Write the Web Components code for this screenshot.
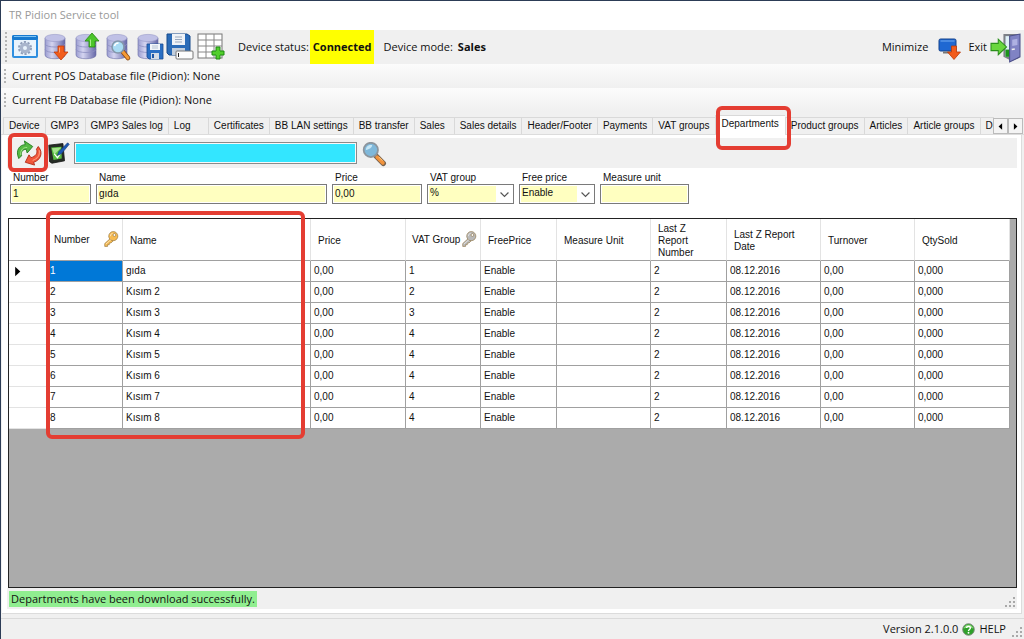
<!DOCTYPE html>
<html lang="en">
<head>
<meta charset="utf-8">
<title>TR Pidion Service tool</title>
<style>
html,body{margin:0;height:100%}
body{font:11px/16px "Open Sans","Noto Sans",sans-serif;color:#111;background:#f0f0f0}
</style>
</head>
<body>
<service-window heading="TR Pidion Service tool"></service-window>

<script>
const ICONS = {
settings:`<rect x="1" y="2" width="26" height="23" rx="2" fill="#2f8fe0"/><rect x="1" y="2" width="26" height="5" rx="2" fill="#1679cf"/><rect x="3" y="3" width="22" height="1" fill="#7cc3f5"/><rect x="3" y="7" width="22" height="16" fill="#e9f3fc"/><circle cx="14" cy="15" r="6" fill="none" stroke="#8f9db8" stroke-width="2" stroke-dasharray="2.2 1.57"/><circle cx="14" cy="15" r="5.4" fill="#a9b5cc"/><circle cx="14" cy="15" r="2" fill="#e9f3fc"/>`,
db:`<defs><linearGradient id="g"><stop offset="0" stop-color="#9a9cd0"/><stop offset=".35" stop-color="#d4d4f0"/><stop offset="1" stop-color="#6668a8"/></linearGradient></defs><path d="M3 5v17c0 5 20 5 20 0V5z" fill="url(#g)" stroke="#6c6ea6" stroke-width=".6"/><ellipse cx="13" cy="5" rx="10" ry="3.6" fill="#c0c1e6" stroke="#9799c8" stroke-width=".6"/><path d="M3 11c1 4 19 4 20 0M3 16.500c1 4 19 4 20 0" fill="none" stroke="#8d8fc2" stroke-width=".8"/>`,
down:`<path d="M16 13h6v6h4l-7 8-7-8h4z" fill="#f25c1c" stroke="#c43a08" stroke-width=".8"/><path d="M17.500 14.500v5" stroke="#ffa56e"/>`,
up:`<path d="M16 14h6V8h4L19 0l-7 8h4z" fill="#4cc52a" stroke="#26880f" stroke-width=".8"/><path d="M17.500 13V6.500" stroke="#a7f088"/>`,
lens:`<path d="M19 19l5 6" stroke="#8a4a16" stroke-width="4.600" stroke-linecap="round"/><path d="M19 19l5 6" stroke="#f59a35" stroke-width="3" stroke-linecap="round"/><circle cx="14" cy="14" r="6" fill="#a9dcf4" stroke="#8497ab" stroke-width="1.600"/><path d="M10.500 13c.5-2 2-3 4-3" stroke="#fff" fill="none" stroke-width="1.400"/>`,
disk:`<path d="M12 11h16v15H14l-2-2z" fill="#2a6fc4" stroke="#1b4c93" stroke-width=".8"/><rect x="15" y="11" width="10" height="6" fill="#f3f6fa"/><path d="M17 13h6M17 15h6" stroke="#9fb0c4" stroke-width=".7"/><rect x="16" y="20" width="8" height="6" fill="#d4dce6"/><rect x="17" y="21" width="2" height="4" fill="#1d55a5"/>`,
save:`<path d="M1 1h20l3 2v19H3l-2-2z" fill="#2b6cb8" stroke="#174a8c"/><path d="M6 1h13v11H6z" fill="#eef2f7"/><path d="M9 4h7M9 6.500h7M9 9h7" stroke="#98a8bd"/><path d="M6 15h13v7H6z" fill="#c3cfdd"/><rect x="10" y="18" width="17" height="8" rx="1" fill="#fdfdfd" stroke="#777"/><path d="M12.500 20v4" stroke="#222"/>`,
table:`<rect x="1" y="1" width="24" height="24" fill="#fff" stroke="#777"/><path d="M9 1v24M17 1v24M1 7h24M1 13h24M1 19h24" stroke="#888"/><path d="M19 14h4v4h4v4h-4v4h-4v-4h-4v-4h4z" fill="#52cf2c" stroke="#1d8a10"/>`,
screen:`<rect x="5" y="6" width="17" height="12" rx="1.500" fill="#1f68d2" stroke="#15428c"/><path d="M6.500 8h14" stroke="#74acf2"/><path d="M9 19.500h9" stroke="#777" stroke-width="2"/><path d="M17.500 13h5v6h4l-6.500 7.500-6.500-7.500h4z" fill="#f25c1c" stroke="#b93a0a" stroke-width=".8"/>`,
exit:`<path d="M12 1h15v23l-7 3-8-4z" fill="#7d8087"/><path d="M14 3h7v20h-7z" fill="#def1f8"/><path d="M14 16h7v7h-7z" fill="#1c941b"/><path d="M18 3l10-2v22l-10 5z" fill="#8083c4" stroke="#4e518b"/><path d="M20.500 6.500l5-1v6l-5 1z" fill="#aeb1e2"/><path d="M20 16l3-.6" stroke="#eee" stroke-width="1.500"/><path d="M0 10h7V6l8 7.500-8 7.500v-4H0z" fill="#69d63e" stroke="#2b901b"/>`,
refresh:`<path d="M3 20C-1 11 4 5 10 5L9 1l9 6-6 7-1-4c-4 0-6 3-5 7z" fill="#55b944" stroke="#267f22"/><path d="M5 16c0-6 3-8 7-8" fill="none" stroke="#a6e68d"/><path d="M24 7c6 7 2 15-5 17l1 3-10-3 4-8 2 3c5-1 8-5 6-9z" fill="#f1573b" stroke="#b22b18"/><path d="M25 11c1 6-2 9-7 11" fill="none" stroke="#ffad8c"/>`,
edit:`<path d="M1 4l18-2 2 22-16 3-3-2z" fill="#262d26" stroke="#111"/><path d="M4 7l13-1 .5 15L7 23z" fill="#59bd41"/><path d="M5 8l12-1-9 9z" fill="#a5e28e"/><path d="M8 15l4 5 10-14" fill="none" stroke="#fff" stroke-width="1.500"/><path d="M12 17l2-5L25 1l2 2-10 12z" fill="#1e58b4" stroke="#123872" stroke-width=".8"/>`,
search:`<path d="M17 17l8 8" stroke="#76624e" stroke-width="6" stroke-linecap="round"/><path d="M18 18l6.500 6.500" stroke="#f2933c" stroke-width="4" stroke-linecap="round"/><path d="M20 18l4 4" stroke="#ffd28c"/><circle cx="11" cy="10" r="8" fill="#7fb8da" stroke="#8c959d" stroke-width="2"/><path d="M5.500 10c0-4 3-6 7-5.500 0 3-3 5-7 5.500z" fill="#c6e6f5"/>`,
key:`<path d="M14 12L3 22v5h5v-3h3v-3h3l4-4z" fill="currentColor" stroke="#8a6d3a"/><circle cx="18" cy="9" r="8" fill="currentColor" stroke="#8a6d3a"/><circle cx="20" cy="7" r="2.400" fill="#fff" stroke="#8a6d3a"/><path d="M13 9c0-3 2-5 4-5M5 23l9-8" stroke="#fffa" fill="none" stroke-width="1.500"/>`,
help:`<circle cx="14" cy="14" r="12.500" fill="#2fa02a" stroke="#7d8a7c" stroke-width="2"/><path d="M4 12c1-11 19-11 20 0-6-3-14-3-20 0z" fill="#8ddc7d"/><path d="M10 11c0-5 8-5 8 0 0 3-4 3-4 6" fill="none" stroke="#fff" stroke-width="3"/><circle cx="14" cy="21" r="2" fill="#fff"/>`,
chevron:`<path d="M4 9l10 10 10-10" fill="none" stroke="#555" stroke-width="3"/>`,
left:`<path d="M19 4v20L8 14z" fill="#000"/>`,
right:`<path d="M9 4v20l11-10z" fill="#000"/>`
};
const COMBINED = {dbdown:['db','down'],dbup:['db','up'],dbfind:['db','lens'],dbsave:['db','disk']};

class ServiceElement extends HTMLElement {
  connectedCallback(){
    if(this.shadowRoot) return;
    const t=document.createElement('template');
    t.innerHTML=`<style>*{box-sizing:border-box}button{font:inherit;color:inherit;background:none;border:0;padding:0;margin:0;display:flex;align-items:center}</style>${this.render()}`;
    this.attachShadow({mode:'open'}).append(t.content.cloneNode(true));
  }
}

customElements.define('pd-icon', class extends ServiceElement {
  render(){
    const n=this.getAttribute('name');
    const body=(COMBINED[n]||[n]).map(k=>ICONS[k]).join('');
    return `<style>:host{display:block;flex:none;width:var(--size,28px);height:var(--size,28px)}svg{display:block;width:100%;height:100%;overflow:visible}</style>
    <svg viewBox="0 0 28 28" aria-hidden="true">${body}</svg>`;
  }
});

customElements.define('pd-grip', class extends ServiceElement {
  render(){
    return `<style>:host{display:block;flex:none;width:2px;height:var(--grip,14px);background:repeating-linear-gradient(#b4b4b4 0 2px,transparent 2px 4px)}</style>`;
  }
});

customElements.define('pd-sizer', class extends ServiceElement {
  render(){
    const d=[[8,0],[4,4],[8,4],[0,8],[4,8],[8,8]].map(([x,y])=>`<rect x="${x}" y="${y}" width="2" height="2"/>`).join('');
    return `<style>:host{display:block;flex:none}svg{display:block;fill:#a9a9a9}</style><svg width="10" height="10" aria-hidden="true">${d}</svg>`;
  }
});

customElements.define('pd-callout', class extends ServiceElement {
  render(){
    return `<style>:host{display:block;position:absolute;z-index:3;border:4px solid #e43d32;border-radius:6px;pointer-events:none}</style>`;
  }
});

customElements.define('pd-toolbar', class extends ServiceElement {
  render(){
    const tools=[['settings','Settings'],['dbdown','Download database'],['dbup','Upload database'],['dbfind','Browse database'],['dbsave','Save database'],['save','Save as'],['table','Add table']];
    return `<style>
    :host{display:flex;align-items:center;height:34px;padding:0 4px 0 4px;background:#f0f0f0}
    pd-grip{--grip:30px}
    .tools{display:flex;gap:3px;margin:0 13px 0 4px}
    .tools pd-icon{--size:28px}
    .state{align-self:stretch;display:flex;align-items:center;background:#ff0;padding:0 3px;margin:0 9px 0 1px}
    .mode{margin-left:5px}
    .spacer{flex:1}
    .min{gap:6px;margin-right:6px}
    .exit{gap:4px}
    .exit pd-icon{--size:29px}
    </style>
    <pd-grip></pd-grip>
    <div class="tools">${tools.map(([i,l])=>`<button aria-label="${l}"><pd-icon name="${i}"></pd-icon></button>`).join('')}</div>
    <span>Device status:</span><b class="state">Connected</b>
    <span>Device mode:</span><b class="mode">Sales</b>
    <span class="spacer"></span>
    <button class="min">Minimize<pd-icon name="screen"></pd-icon></button>
    <button class="exit">Exit<pd-icon name="exit"></pd-icon></button>`;
  }
});

customElements.define('pd-strip', class extends ServiceElement {
  render(){
    return `<style>:host{display:flex;align-items:center;gap:6px;height:24px;padding-left:3px;background:linear-gradient(#fcfcfc,#f0f0f0)}</style><pd-grip></pd-grip><slot></slot>`;
  }
});

customElements.define('pd-tabs', class extends ServiceElement {
  render(){
    const tabs=['Device','GMP3','GMP3 Sales log','Log','Certificates','BB LAN settings','BB transfer','Sales','Sales details','Header/Footer','Payments','VAT groups','Departments','Product groups','Articles','Article groups','D'];
    return `<style>
    :host{display:flex;align-items:flex-end;height:20px;padding:0 1px 0 2px;font:10px/14px "Liberation Sans",Arial,sans-serif;border-bottom:1px solid #dcdcdc}
    .list{display:flex;align-items:flex-end;flex:1;min-width:0}
    .tab{flex:none;position:relative;height:17px;min-width:40px;padding:0 5px;border:1px solid #d9d9d9;border-width:1px 0 0 1px}
    .tab:last-of-type{min-width:0;padding-right:1px}
    .tab[aria-selected=true]{height:20px;margin-bottom:-1px;padding:0 6px 3px;background:#fff}
    pd-callout{left:0;right:-6px;top:-10px;bottom:-15px}
    .scroll{display:flex;flex:none}
    .scroll button{width:15px;height:16px;justify-content:center;border:1px solid #bbb;background:#f4f4f4}
    .scroll pd-icon{--size:9px}
    </style>
    <div class="list" role="tablist">${tabs.map(t=>`<button class="tab" role="tab" aria-selected="${t==='Departments'}">${t}${t==='Departments'?'<pd-callout></pd-callout>':''}</button>`).join('')}</div>
    <div class="scroll"><button aria-label="Previous tabs"><pd-icon name="left"></pd-icon></button><button aria-label="Next tabs"><pd-icon name="right"></pd-icon></button></div>`;
  }
});

customElements.define('pd-actions', class extends ServiceElement {
  render(){
    return `<style>
    :host{display:flex;align-items:center;height:30px;background:#f0f0f0;padding-left:9px}
    .reload{position:relative;margin-right:6px;--size:26px}
    pd-callout{inset:-7px -6px -6px -8px}
    .edit{--size:22px}
    .find{--size:25px}
    input{width:283px;height:22px;margin:0 4px;border:1px solid #8a8a8a;outline:1px solid #f8f8f8;outline-offset:-2px;background:#33e6ff;font:inherit;padding:0 4px}
    </style>
    <button class="reload" aria-label="Download departments"><pd-icon name="refresh"></pd-icon><pd-callout></pd-callout></button>
    <button class="edit" aria-label="Edit department"><pd-icon name="edit"></pd-icon></button>
    <input type="text" aria-label="Search departments">
    <button class="find" aria-label="Search"><pd-icon name="search"></pd-icon></button>`;
  }
});

customElements.define('pd-field', class extends ServiceElement {
  render(){
    const v=this.getAttribute('value')||'', l=this.getAttribute('label'), sel=this.hasAttribute('choice');
    return `<style>
    :host{display:flex;flex-direction:column;width:var(--w)}
    label{padding-left:3px;line-height:12px}
    .box{position:relative;display:flex}
    input,select{width:100%;height:20px;margin:0;border:1px solid #7a7a7a;border-radius:0;color:inherit;font:inherit;padding:0 2px 2px;outline:1px solid #fff;outline-offset:-2px;background:#ffffc0}
    select{appearance:none;background:linear-gradient(#ffffc0,#ffffc0) 0 0/calc(100% - 17px) 100% no-repeat #fff;padding:0 18px 2px 2px}
    pd-icon{--size:11px;position:absolute;right:4px;top:5px;pointer-events:none}
    </style><label for="f">${l}</label><div class="box">${sel?`<select id="f"><option>${v}</option></select><pd-icon name="chevron"></pd-icon>`:`<input id="f" type="text" value="${v}">`}</div>`;
  }
});

customElements.define('pd-grid', class extends ServiceElement {
  render(){
    const cols=[41,73,188,95,75,76,94,76,94,94,95];
    const heads=['','Number','Name','Price','VAT Group','FreePrice','Measure Unit','Last Z Report Number','Last Z Report Date','Turnover','QtySold'];
    const names=['gıda','Kısım 2','Kısım 3','Kısım 4','Kısım 5','Kısım 6','Kısım 7','Kısım 8'];
    const total=cols.reduce((a,b)=>a+b);
    const head=heads.map(h=>{
      if(!h) return '<th aria-label="Current row"></th>';
      const key=h==='Number'?'gold':h==='VAT Group'?'silver':'';
      return `<th scope="col"${key?` class="keyed"`:''}>${h}${key?`<pd-icon class="${key}" name="key"></pd-icon>`:''}</th>`;
    }).join('');
    const rows=names.map((n,i)=>{
      const cells=[i+1,n,'0,00',Math.min(i+1,4),'Enable','','2','08.12.2016','0,00','0,000'];
      return `<tr><td class="mark">${i?'':'<pd-icon name="right"></pd-icon>'}</td>${cells.map((c,j)=>`<td${!i&&!j?' class="on"':''}>${c}</td>`).join('')}</tr>`;
    }).join('');
    return `<style>
    :host{display:block;position:relative;border:1px solid #222;background:#ababab;min-height:220px}
    table{border-collapse:separate;border-spacing:0;table-layout:fixed;width:${total}px;background:#fff}
    th{position:relative;height:42px;padding:2px 20px 0 7px;text-align:left;font-weight:400;line-height:12px;border-right:1px solid #e3e3e3;border-bottom:1px solid #a0a0a0;vertical-align:middle}
    td{height:21px;padding:0 3px;line-height:12px;border-right:1px solid #a0a0a0;border-bottom:1px solid #a0a0a0}
    td:nth-child(2){padding-left:0}
    th:nth-child(2){padding-left:4px}
    td.mark{border-color:#e3e3e3;padding:0 2px}
    .mark pd-icon{--size:13px}
    .on{background:#0078d7;color:#fff}
    th.keyed{padding-top:0;padding-left:6px;white-space:nowrap}
    th.keyed:nth-child(2){padding-left:4px}
    .keyed pd-icon{--size:16px;position:absolute;right:3px;top:12px}
    .gold{color:#f6bb52}.silver{color:#b9b9b9}
    pd-callout{left:37px;top:-8px;width:259px;height:228px}
    </style>
    <table><colgroup>${cols.map(c=>`<col style="width:${c}px">`).join('')}</colgroup><thead><tr>${head}</tr></thead><tbody>${rows}</tbody></table><pd-callout></pd-callout>`;
  }
});

customElements.define('service-window', class extends ServiceElement {
  render(){
    return `<style>
    :host{display:flex;flex-direction:column;min-height:100vh;box-sizing:border-box;border:solid #2c3c56;border-width:1px 0 0 1px}
    header{height:29px;padding:0 8px;line-height:28px;background:#fff;color:#999}
    pd-tabs{margin-top:3px}
    .page{flex:1;display:flex;flex-direction:column;margin:0 2px 0 1px;padding:3px 4px 4px 5px;background:#fff;border-right:1px solid #dcdcdc;border-bottom:1px solid #dcdcdc}
    .fields{display:flex;gap:5px;padding:4px 3px 14px;font:10px/12px "Liberation Sans",Arial,sans-serif}
    pd-grid{flex:1;margin-left:1px;font:10px/12px "Liberation Sans",Arial,sans-serif}
    .note{display:flex;align-items:center;justify-content:space-between;background:#f0f0f0;height:21px;padding:0 2px}
    .note output{background:#90ee90;padding:0 2px;line-height:16px}
    footer{display:flex;align-items:center;justify-content:flex-end;gap:4px;height:21px;margin-top:4px;padding-right:2px;border-top:1px solid #dadada}
    a{display:flex;align-items:center;gap:4px;color:inherit;text-decoration:none;--size:13px}
    footer pd-sizer{margin-left:2px}
    pd-sizer{align-self:flex-end;margin-bottom:2px}
    </style>
    <header>${this.getAttribute('heading')}</header>
    <pd-toolbar></pd-toolbar>
    <pd-strip>Current POS Database file (Pidion): None</pd-strip>
    <pd-strip>Current FB Database file (Pidion): None</pd-strip>
    <pd-tabs></pd-tabs>
    <main class="page">
      <pd-actions></pd-actions>
      <form class="fields">
        <pd-field label="Number" value="1" style="--w:81px"></pd-field>
        <pd-field label="Name" value="gıda" style="--w:231px"></pd-field>
        <pd-field label="Price" value="0,00" style="--w:90px"></pd-field>
        <pd-field label="VAT group" value="%" choice style="--w:87px"></pd-field>
        <pd-field label="Free price" value="Enable" choice style="--w:76px"></pd-field>
        <pd-field label="Measure unit" style="--w:89px"></pd-field>
      </form>
      <pd-grid></pd-grid>
      <div class="note"><output>Departments have been download successfully.</output><pd-sizer></pd-sizer></div>
    </main>
    <footer><span>Version 2.1.0.0</span><a href="#help"><pd-icon name="help"></pd-icon>HELP</a><pd-sizer></pd-sizer></footer>`;
  }
});
</script>
</body>
</html>
